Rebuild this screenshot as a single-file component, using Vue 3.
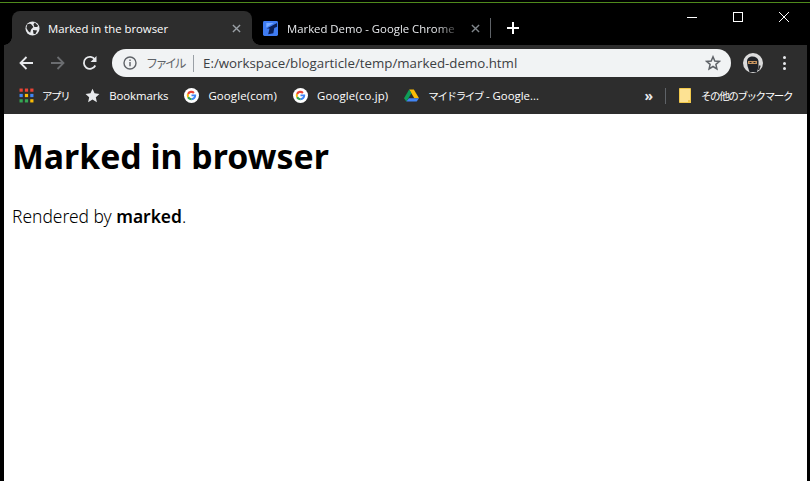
<template>
  <div class="window">
    <div class="frame-top"><div class="accent"></div></div>
    <div class="titlebar">
      <div class="tab active">
        <svg class="favicon" viewBox="0 0 16 16">
          <circle cx="8" cy="8" r="7.500" fill="#e8eaed" />
          <path d="M2.500 3.500C4 2.500 6.500 2.800 7.500 4.500L9 6.500 6.500 9 5.500 12.500 3.500 11 1.500 7.500ZM10.500 1.500 14 5l-1 1.500H10L9 3.500ZM8.500 9.500l4.500.5-2 4-2-.5Z" fill="#2d2d2d" />
        </svg>
        <span class="tab-title">Marked in the browser</span>
        <svg class="tab-close" viewBox="0 0 10 10"><path d="M1 1l8 8M9 1l-8 8" stroke="#9aa0a6" stroke-width="1.500" /></svg>
      </div>
      <div class="tab second">
        <svg class="favicon" viewBox="0 0 16 16">
          <rect width="16" height="16" rx="1.500" fill="#3f7cf2" />
          <path d="M3.500 2h8L3.500 7Z" fill="#79abff" />
          <path d="M4 8 15 2v4l-3 1.500-1 5.500-5.500 1 1.500-6Z" fill="#0b1f55" />
        </svg>
        <span class="tab-title fade">Marked Demo - Google Chrome</span>
        <svg class="tab-close" viewBox="0 0 10 10"><path d="M1 1l8 8M9 1l-8 8" stroke="#80868b" stroke-width="1.500" /></svg>
      </div>
      <div class="tab-sep"></div>
      <svg class="new-tab" viewBox="0 0 12 12"><path d="M6 0v12M0 6h12" stroke="#fff" stroke-width="2" /></svg>
      <div class="window-controls">
        <svg viewBox="0 0 10 10"><path d="M0 5.500h10" stroke="#fff" /></svg>
        <svg viewBox="0 0 10 10"><rect x=".5" y=".5" width="9" height="9" fill="none" stroke="#fff" /></svg>
        <svg viewBox="0 0 10 10"><path d="M0 0l10 10M10 0 0 10" stroke="#fff" /></svg>
      </div>
    </div>

    <div class="toolbar">
      <svg class="nav" viewBox="0 0 16 16"><path d="M15 8H2.500M8.500 2 2.500 8l6 6" fill="none" stroke="#e8eaed" stroke-width="1.800" /></svg>
      <svg class="nav" viewBox="0 0 16 16"><path d="M1 8h12.500M7.500 2l6 6-6 6" fill="none" stroke="#6b6d70" stroke-width="1.800" /></svg>
      <svg class="nav" viewBox="0 0 16 16"><path d="M13.300 10.500A6 6 0 1 1 13 4.700" fill="none" stroke="#e8eaed" stroke-width="1.800" /><path d="M14.500 1v6h-6Z" fill="#e8eaed" /></svg>
      <div class="omnibox">
        <svg class="info" viewBox="0 0 14 14">
          <circle cx="7" cy="7" r="6" fill="none" stroke="#5f6368" stroke-width="1.400" />
          <path d="M6.300 6h1.400v4.200H6.300zM6.300 3.600h1.400V5H6.300z" fill="#5f6368" />
        </svg>
        <span class="scheme">ファイル</span>
        <span class="omni-sep"></span>
        <span class="url">E:/workspace/blogarticle/temp/marked-demo.html</span>
        <svg class="star" viewBox="0 0 16 16"><path d="M8 1.800 9.800 6l4.600.4-3.500 3 1 4.500L8 11.500l-3.900 2.400 1-4.500-3.500-3L6.200 6Z" fill="none" stroke="#5f6368" stroke-width="1.500" /></svg>
      </div>
      <svg class="avatar" viewBox="0 0 20 20">
        <circle cx="10" cy="10" r="10" fill="#dcdcdc" />
        <path d="M4 8.500C4 5 6.500 3.500 9.500 3.500S15 5 15.500 8v6l-1.500 5H6.500L4.500 13Z" fill="#1f2227" />
        <rect x="5" y="8" width="9" height="3" fill="#c4935f" />
        <rect x="6.500" y="9" width="2" height="1" fill="#1f2227" />
        <rect x="10.500" y="9" width="2" height="1" fill="#1f2227" />
        <path d="M17 12.500 15.500 17" stroke="#2d2d2d" stroke-width="1.500" />
      </svg>
      <div class="dots"><i></i><i></i><i></i></div>
    </div>

    <div class="bookmarks">
      <div class="mark apps">
        <svg class="mark-icon" viewBox="0 0 14 14">
          <rect v-for="cell in appCells" :key="cell.x + '-' + cell.y" :x="cell.x" :y="cell.y" width="3" height="3" :fill="cell.color" />
        </svg>
        <span class="ja">アプリ</span>
      </div>
      <div class="mark">
        <svg class="mark-icon" viewBox="0 0 14 14"><path d="M7 .8 8.900 5l4.600.5-3.400 3.100 1 4.600L7 10.800l-4.100 2.400 1-4.600L.5 5.500 5.100 5Z" fill="#e8eaed" /></svg>
        <span class="tight">Bookmarks</span>
      </div>
      <div v-for="label in googleMarks" :key="label" class="mark">
        <svg class="mark-icon" viewBox="0 0 16 16">
          <circle cx="8" cy="8" r="8" fill="#fff" />
          <path d="M12.900 6.800H8v2h2.800c-.4 1.200-1.500 1.900-2.800 1.900V13c2.900 0 5-2 5-4.900 0-.5 0-.9-.1-1.300Z" fill="#4285f4" />
          <path d="M8 10.700c-1.300 0-2.300-.8-2.700-1.900L3.400 10.300C4.200 12 6 13 8 13Z" fill="#34a853" />
          <path d="M5.300 8.800a3 3 0 0 1 0-1.700L3.400 5.700a5 5 0 0 0 0 4.600Z" fill="#fbbc05" />
          <path d="M8 5.300c.7 0 1.300.2 1.800.7l1.600-1.600A5 5 0 0 0 3.400 5.700l1.900 1.400C5.700 6 6.700 5.300 8 5.300Z" fill="#ea4335" />
        </svg>
        <span class="wide">{{ label }}</span>
      </div>
      <div class="mark">
        <svg class="mark-icon" viewBox="0 0 16 16">
          <path d="M5.500 1.500h5L16 11h-5Z" fill="#fbbc05" />
          <path d="M5.500 1.500 0 11l2.500 3.500L8 5.500Z" fill="#0f9d58" />
          <path d="M2.500 14.500h11L16 11H5.200Z" fill="#4285f4" />
        </svg>
        <span><span class="ja">マイドライブ</span> - Google...</span>
      </div>
      <div class="more">»</div>
      <div class="mark-sep"></div>
      <div class="mark other">
        <svg class="folder" viewBox="0 0 12 15"><path d="M.5.500h11v14H.5z" fill="#fde293" stroke="#f2c94c" /><path d="M9 15v-3h3v3z" fill="#f2c94c" /></svg>
        <span class="ja">その他のブックマーク</span>
      </div>
    </div>

    <main class="page">
      <h1>Marked in browser</h1>
      <p>Rendered by <strong>marked</strong>.</p>
    </main>
  </div>
</template>

<script setup>
const googleMarks = ['Google(com)', 'Google(co.jp)']

const appColors = [
  '#ea4335', '#ea4335', '#ea4335',
  '#4285f4', '#fbbc05', '#4285f4',
  '#34a853', '#34a853', '#fbbc05'
]

const appCells = appColors.map((color, i) => ({
  color,
  x: (i % 3) * 5 + 0.5,
  y: Math.floor(i / 3) * 5 + 0.5
}))
</script>

<style>
html, body {
  margin: 0;
  overflow: hidden;
  background: #000;
}
</style>

<style scoped>
.window {
  width: 810px;
  height: 481px;
  box-sizing: border-box;
  padding: 0 3px 0 4px;
  display: flex;
  flex-direction: column;
  background: #000;
  overflow: hidden;
}

.frame-top {
  height: 3px;
  margin: 0 -3px 0 -4px;
  padding-top: 2px;
  box-sizing: border-box;
}

.accent {
  height: 1px;
  background: #4f8a1c;
}

.titlebar {
  height: 42px;
  display: flex;
  align-items: flex-end;
  padding-left: 8px;
}

.tab {
  position: relative;
  width: 240px;
  height: 34px;
  box-sizing: border-box;
  display: flex;
  align-items: center;
  padding: 0 11px 0 13px;
  gap: 8px;
  border-radius: 8px 8px 0 0;
  color: #e8eaed;
  font-family: "Open Sans", sans-serif;
  font-size: 11.35px;
}

.tab.second {
  width: 238px;
  padding: 0 10px 0 11px;
  gap: 9px;
}

.tab.active {
  background: #2d2d2d;
  color: #fff;
}

/* flared bottom corners of the active tab */
.tab.active::before,
.tab.active::after {
  content: "";
  position: absolute;
  bottom: 0;
  width: 8px;
  height: 8px;
}

.tab.active::before {
  left: -8px;
  background: radial-gradient(circle at 0 0, #000 7.5px, #2d2d2d 8px);
}

.tab.active::after {
  right: -8px;
  background: radial-gradient(circle at 100% 0, #000 7.5px, #2d2d2d 8px);
}

.favicon {
  width: 15px;
  height: 15px;
  flex: none;
}

.tab-title {
  flex: 1;
  white-space: nowrap;
  overflow: hidden;
}

.tab-title.fade {
  -webkit-mask-image: linear-gradient(to right, #000 85%, transparent);
  mask-image: linear-gradient(to right, #000 85%, transparent);
}

.tab-close {
  width: 9px;
  height: 9px;
  flex: none;
}

.tab-sep {
  width: 1px;
  height: 20px;
  margin-bottom: 7px;
  background: #5f6368;
}

.new-tab {
  width: 12px;
  height: 12px;
  margin: 0 0 11px 16px;
  flex: none;
}

.window-controls {
  display: flex;
  gap: 36px;
  align-self: flex-start;
  margin: 9px 18px 0 auto;
}

.window-controls svg {
  width: 10px;
  height: 10px;
  display: block;
}

.toolbar {
  height: 37px;
  background: #2d2d2d;
  display: flex;
  align-items: center;
  padding-left: 14px;
}

.nav {
  width: 16px;
  height: 16px;
  margin: -1px 16px 0 0;
  flex: none;
}

.omnibox {
  width: 619px;
  height: 28px;
  margin: -1px 0 0 -2px;
  background: #f1f3f4;
  border-radius: 14px;
  display: flex;
  align-items: center;
  padding: 0 10px 0 11px;
  box-sizing: border-box;
  font-family: "Open Sans", "Noto Sans CJK JP", sans-serif;
  font-size: 13.300px;
}

.info {
  width: 14px;
  height: 14px;
  flex: none;
  margin-right: 9px;
}

.scheme {
  color: #5f6368;
  font-size: 12px;
  letter-spacing: -2.500px;
}

.omni-sep {
  width: 1px;
  height: 17px;
  margin: 0 9px 0 9px;
  background: #9aa0a6;
}

.url {
  flex: 1;
  color: #3c4043;
  white-space: nowrap;
}

.star {
  width: 16px;
  height: 16px;
  flex: none;
}

.avatar {
  width: 20px;
  height: 20px;
  margin: -1px 0 0 12px;
  flex: none;
}

.dots {
  display: flex;
  flex-direction: column;
  gap: 2.500px;
  margin: -1px 0 0 20px;
}

.dots i {
  width: 3px;
  height: 3px;
  border-radius: 50%;
  background: #e8eaed;
}

.bookmarks {
  height: 32px;
  background: #2d2d2d;
  display: flex;
  align-items: center;
  padding: 0 15px 5px 15px;
  box-sizing: border-box;
  gap: 16px;
  color: #fff;
  font-family: "Open Sans", "Noto Sans CJK JP", sans-serif;
  font-size: 11.400px;
  white-space: nowrap;
}

.mark {
  display: flex;
  align-items: center;
  gap: 9px;
}

.mark.apps {
  gap: 8px;
}

.mark.other {
  gap: 10px;
}

.mark-icon {
  width: 15px;
  height: 15px;
  flex: none;
}

.folder {
  width: 12px;
  height: 15px;
  flex: none;
}

.ja {
  font-size: 10.500px;
  letter-spacing: -1.400px;
}

.tight {
  letter-spacing: -.1px;
}

.wide {
  letter-spacing: .15px;
}

.more {
  margin-left: auto;
  font-size: 14px;
  line-height: 14px;
  font-weight: 700;
  color: #e8eaed;
}

.mark-sep {
  width: 1px;
  height: 16px;
  margin: 0 -3px 0 -4px;
  background: #5f6368;
}

.page {
  flex: 1;
  padding: 0 8px;
  background: #fff;
  color: #000;
  font-family: "Noto Sans", "Noto Sans CJK JP", sans-serif;
}

h1 {
  margin: 20px 0 0;
  font-size: 33.800px;
  line-height: 44px;
  font-weight: 700;
}

p {
  margin: 26px 0 0;
  font-size: 17.400px;
  line-height: 24px;
  font-weight: 300;
}

strong {
  font-weight: 600;
}
</style>
